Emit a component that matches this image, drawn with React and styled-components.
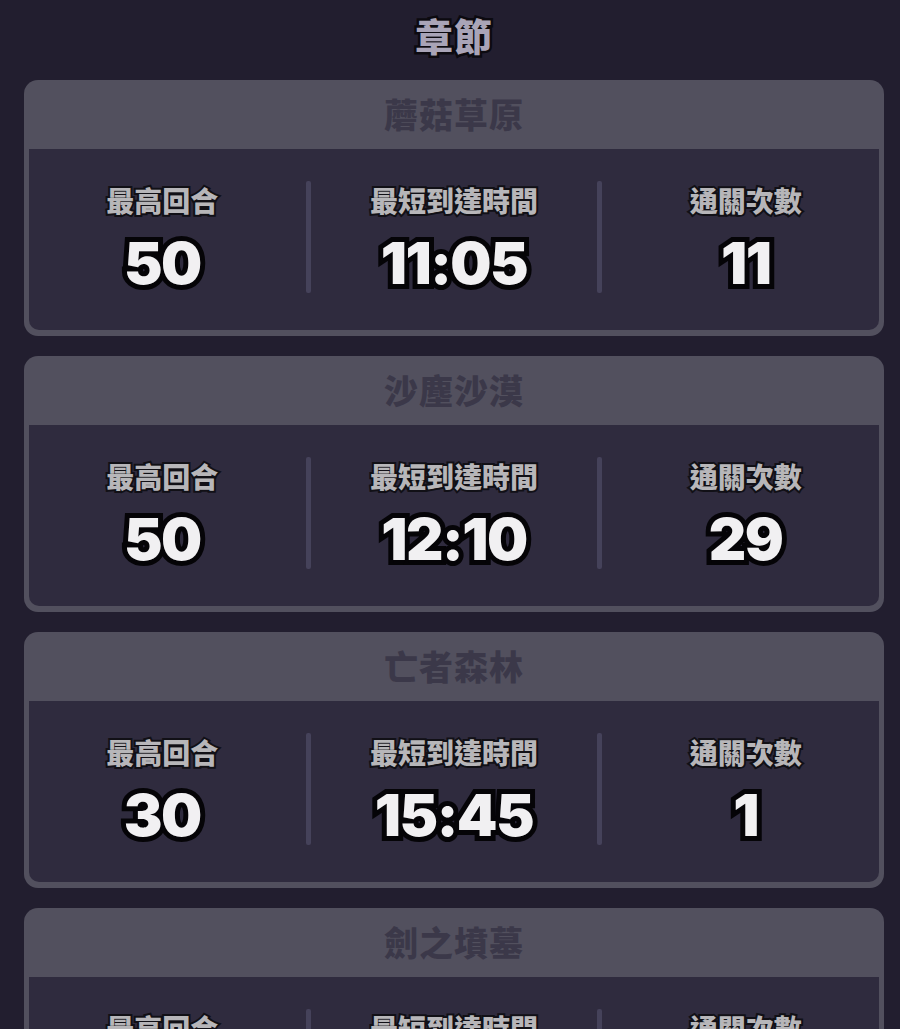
import React from "react";
import styled, { createGlobalStyle } from "styled-components";

const Global = createGlobalStyle`
  html, body { margin: 0; padding: 0; background: #221e2f; }
  body { font-family: "Noto Sans CJK TC", "Noto Sans", sans-serif; }
`;

const Page = styled.div`
  padding: 12px 16px 40px 24px;
  display: flex;
  flex-direction: column;
  gap: 20px;
`;

const Title = styled.h1`
  margin: 0 0 3px;
  text-align: center;
  font-family: "Noto Sans CJK TC", sans-serif;
  font-weight: 900;
  font-size: 38px;
  line-height: 45px;
  color: #a9a4b7;
  -webkit-text-stroke: 5px #0c0a10;
  paint-order: stroke fill;
  letter-spacing: 1px;
`;

const Card = styled.section`
  background: #52505e;
  border-radius: 14px;
  padding: 0 5px 6px;
  display: flex;
  flex-direction: column;
`;

const CardHeader = styled.h2`
  margin: 0;
  height: 69px;
  padding-bottom: 3px;
  box-sizing: border-box;
  display: flex;
  align-items: center;
  justify-content: center;
  font-family: "Noto Sans CJK TC", sans-serif;
  font-weight: 900;
  font-size: 34px;
  letter-spacing: 1px;
  color: #3b3849;
`;

const CardBody = styled.div`
  background: #2f2b3e;
  border-radius: 0 0 10px 10px;
  padding: 32px 0 37px;
`;

const Row = styled.div`
  display: grid;
  grid-template-columns: 1fr 5px 1fr 5px 1fr;
  margin: 0 -10px;
`;

const Divider = styled.div`
  background: #45425a;
  border-radius: 2px;
`;

const Stat = styled.div`
  display: flex;
  flex-direction: column;
  align-items: center;
`;

const Label = styled.div`
  font-family: "Noto Sans CJK TC", sans-serif;
  font-weight: 900;
  font-size: 28px;
  line-height: 38px;
  color: #b7b6b9;
  -webkit-text-stroke: 4px #111016;
  paint-order: stroke fill;
`;

const Value = styled.div`
  margin-top: 14px;
  font-family: Inter, "Noto Sans", sans-serif;
  font-weight: 900;
  font-size: 58px;
  line-height: 60px;
  letter-spacing: -1.5px;
  color: #f1f0f2;
  -webkit-text-stroke: 10px #050407;
  paint-order: stroke fill;
  text-shadow: 0 3px 0 #050407;
`;

const chapters = [
  { name: "蘑菇草原", round: "50", time: "11:05", clears: "11" },
  { name: "沙塵沙漠", round: "50", time: "12:10", clears: "29" },
  { name: "亡者森林", round: "30", time: "15:45", clears: "1" },
  { name: "劍之墳墓", round: "40", time: "18:30", clears: "5" },
];

const StatCell = ({ label, value }) => (
  <Stat>
    <Label>{label}</Label>
    <Value>{value}</Value>
  </Stat>
);

export default function App() {
  return (
    <>
      <Global />
      <Page>
        <Title>章節</Title>
        {chapters.map((c) => (
          <Card key={c.name}>
            <CardHeader>{c.name}</CardHeader>
            <CardBody>
              <Row>
                <StatCell label="最高回合" value={c.round} />
                <Divider />
                <StatCell label="最短到達時間" value={c.time} />
                <Divider />
                <StatCell label="通關次數" value={c.clears} />
              </Row>
            </CardBody>
          </Card>
        ))}
      </Page>
    </>
  );
}
